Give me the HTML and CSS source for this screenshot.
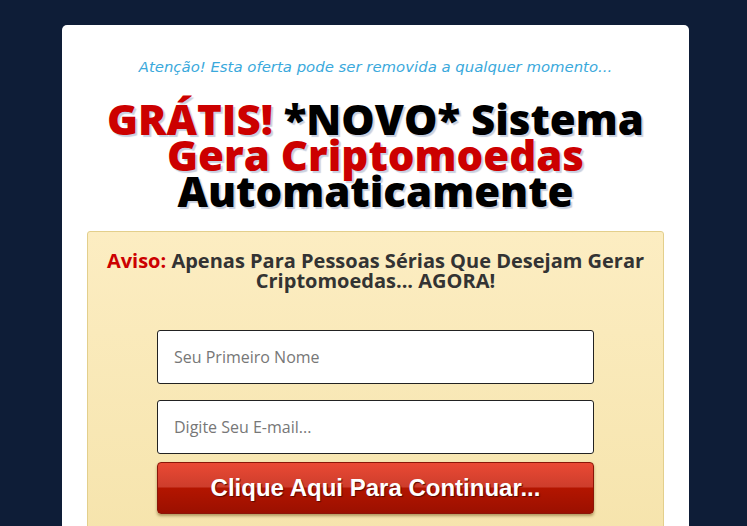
FILE: index.html
```html
<!DOCTYPE html>
<html lang="pt">
<head>
<meta charset="utf-8">
<link rel="stylesheet" href="styles.css">
</head>
<body>
<div class="card">
  <p class="alert">Atenção! Esta oferta pode ser removida a qualquer momento...</p>
  <h1 class="headline"><span class="red">GRÁTIS!</span> *NOVO* Sistema<br><span class="red">Gera Criptomoedas</span><br>Automaticamente</h1>
  <div class="optin">
    <p class="warn"><span class="red">Aviso:</span> Apenas Para Pessoas Sérias Que Desejam Gerar Criptomoedas... AGORA!</p>
    <form class="form">
      <input class="field" type="text" placeholder="Seu Primeiro Nome">
      <input class="field" type="text" placeholder="Digite Seu E-mail...">
      <button class="btn" type="button">Clique Aqui Para Continuar...</button>
    </form>
  </div>
</div>
</body>
</html>
```
FILE: styles.css
```css
html, body {
  margin: 0;
  padding: 0;
  background: #0e1d37;
  height: 100%;
  overflow: hidden;
}
.card {
  background: #fff;
  margin: 25px 58px 0 62px;
  border-radius: 5px;
  padding: 32px 25px 0;
  height: 600px;
}
.alert {
  margin: 0;
  text-align: center;
  font-family: "DejaVu Sans", sans-serif;
  font-style: italic;
  font-size: 14.9px;
  color: #3aa9dc;
  line-height: 20px;
}
.headline {
  margin: 24px 0 0;
  text-align: center;
  font-family: "Open Sans", sans-serif;
  font-weight: 800;
  font-size: 42px;
  line-height: 36px;
  color: #000;
  text-shadow: 2px 2px 1px #c8d0e0;
}
.red { color: #cc0000; }
.optin {
  margin-top: 22px;
  background: linear-gradient(#fcedc2, #f3e0a3);
  border: 1px solid #e3cf8c;
  border-radius: 3px;
  padding: 19px 16px 20px;
  height: 400px;
}
.warn {
  margin: 0;
  text-align: center;
  font-family: "Open Sans", sans-serif;
  font-weight: 700;
  font-size: 20px;
  line-height: 20px;
  color: #333;
}
.form {
  width: 437px;
  margin: 39px auto 0;
  display: flex;
  flex-direction: column;
}
.field {
  box-sizing: border-box;
  height: 54px;
  width: 100%;
  border: 1px solid #222;
  border-radius: 3px;
  padding: 0 16px;
  font-family: "Open Sans", sans-serif;
  font-size: 16px;
  color: #333;
  background: #fff;
  margin-bottom: 16px;
}
.field:nth-child(2) { margin-bottom: 8px; }
.field::placeholder { color: #777; }
.btn {
  box-sizing: border-box;
  height: 52px;
  width: 100%;
  border: 1px solid #8b1608;
  border-radius: 4px;
  background: linear-gradient(#ea4934 0%, #cd3d2c 48%, #b31500 50%, #9b1000 100%);
  box-shadow: 0 2px 3px rgba(90, 60, 0, 0.45);
  color: #fff;
  font-family: "Liberation Sans", Arial, sans-serif;
  font-weight: 700;
  font-size: 24px;
  text-shadow: 1px 1px 1px #5a0a00;
  padding: 0;
}
```
